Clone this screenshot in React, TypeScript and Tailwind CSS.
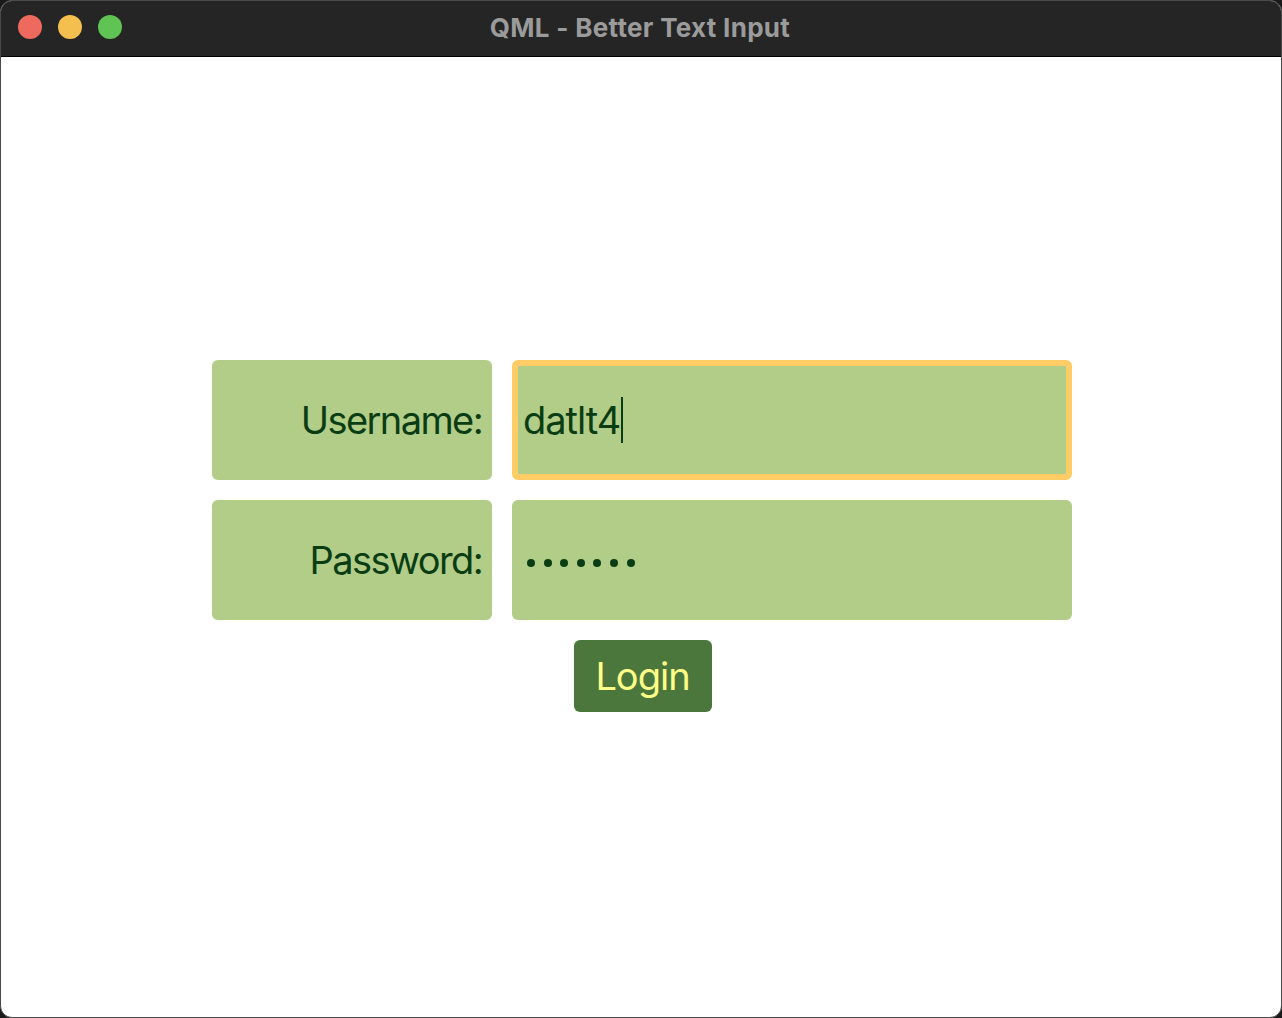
const Light = ({ color }: { color: string }) => (
  <span className={`block w-6 h-6 rounded-full ${color}`} />
);

const App = () => (
  <div className="w-[1282px] h-[1018px] bg-[#1a1a1a]" style={{ fontFamily: "Inter, 'Noto Sans', sans-serif" }}>
    <div className="w-full h-full rounded-[12px] border border-[#4a4a4a] overflow-hidden flex flex-col bg-white">
      <div className="h-[56px] shrink-0 bg-[#252525] border-b border-black relative flex items-center justify-center">
        <div className="absolute left-[17px] top-[14px] flex gap-4">
          <Light color="bg-[#ee6a5f]" />
          <Light color="bg-[#f5bf4f]" />
          <Light color="bg-[#5fc454]" />
        </div>
        <span className="text-[#9b9b9b] font-bold text-[26px] tracking-[0.3px] -mt-[2px] -ml-[2px]">QML - Better Text Input</span>
      </div>
      <div className="flex-1 flex flex-col items-center justify-center pl-[2px] pb-[2px]">
        <div className="grid grid-cols-[280px_560px] grid-rows-[120px_120px] gap-5 text-[#0b3d14] text-[38px]">
          <div className="bg-[#b1cd88] rounded-md flex items-center justify-end pr-[10px] tracking-[-1.6px]">Username:</div>
          <div className="bg-[#b1cd88] rounded-md border-[6px] border-[#ffcc66] flex items-center pl-[5px] tracking-[-1px]">
            <span>datlt4</span>
            <span className="block w-[2px] h-[46px] bg-[#0b3d14] ml-[1px]" />
          </div>
          <div className="bg-[#b1cd88] rounded-md flex items-center justify-end pr-[10px] tracking-[-1.6px]">Password:</div>
          <div className="bg-[#b1cd88] rounded-md flex items-center pl-[15px] pt-[5px] gap-[8.6px]">
            {Array.from({ length: 7 }).map((_, i) => (
              <span key={i} className="block w-[8px] h-[8px] rounded-full bg-[#0b3d14]" />
            ))}
          </div>
        </div>
        <button className="mt-5 ml-[1px] w-[138px] h-[72px] rounded-md bg-[#4b773d] text-[#ffff88] text-[38px] tracking-[-1px] flex items-center justify-center">
          Login
        </button>
      </div>
    </div>
  </div>
);

export default App;
